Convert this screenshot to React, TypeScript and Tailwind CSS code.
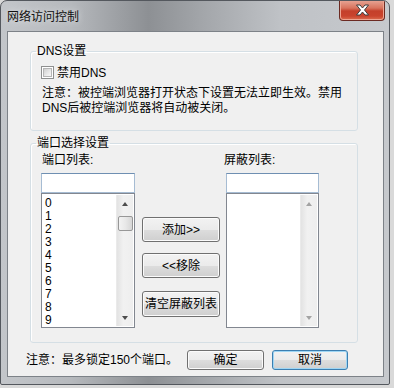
const font = { fontFamily: '"Liberation Sans", "Noto Sans CJK SC", sans-serif' };

function ScrollBar({ thumb }: { thumb?: boolean }) {
  return (
    <div className="w-[17px] flex flex-col items-center bg-[linear-gradient(to_right,#e3e3e3,#f1f1f1_40%,#eeeeee)] border-l border-[#eaeaea]">
      <div className="h-[17px] flex items-center justify-center">
        <div className={`w-0 h-0 border-x-[3.5px] border-x-transparent border-b-[4px] ${thumb ? 'border-b-[#4d4d4d]' : 'border-b-[#a3a3a3]'}`} />
      </div>
      {thumb && (
        <div className="mt-[4px] w-[15px] h-[15px] rounded-[2px] border border-[#979797] bg-[linear-gradient(to_right,#f3f3f3,#e8e8e8_50%,#d6d6d6)]" />
      )}
      <div className="flex-1" />
      <div className="h-[17px] flex items-center justify-center">
        <div className={`w-0 h-0 border-x-[3.5px] border-x-transparent border-t-[4px] ${thumb ? 'border-t-[#4d4d4d]' : 'border-t-[#a3a3a3]'}`} />
      </div>
    </div>
  );
}

function Btn({ label, cls, focus }: { label: string; cls: string; focus?: boolean }) {
  return (
    <div
      className={`${cls} flex items-center justify-center rounded-[3px] border text-[12px] text-black ${
        focus
          ? 'border-[#3c7fb1] shadow-[inset_0_0_0_1px_#9fd6f4]'
          : 'border-[#707070] shadow-[inset_0_0_0_1px_#fbfbfb]'
      } bg-[linear-gradient(to_bottom,#f2f2f2_0%,#ebebeb_50%,#dddddd_51%,#cfcfcf_100%)]`}
    >
      {label}
    </div>
  );
}

function ListCol({ label, items, thumb, labelCls }: { label: string; items: string[]; thumb?: boolean; labelCls: string }) {
  return (
    <div className="flex flex-col">
      <div className={`${labelCls} mt-[3px] h-[14px] leading-[14px] text-[12px]`}>{label}</div>
      <div className="mt-[6px] h-[20px] bg-white border border-[#a6bcd3] border-t-[#6f8fb2]" />
      <div className="h-[135px] flex bg-white border border-[#828790] p-[1px]">
        <div className="flex-1 pl-[2px] pt-[2px] text-[12px] leading-[13px] text-black">
          {items.map((it) => (
            <div key={it}>{it}</div>
          ))}
        </div>
        <ScrollBar thumb={thumb} />
      </div>
    </div>
  );
}

export default function App() {
  const ports = ['0', '1', '2', '3', '4', '5', '6', '7', '8', '9'];
  return (
    <div className="w-[394px] h-[388px] bg-[#d9d9d9]" style={font}>
      <div className="w-[390px] h-[385px] flex flex-col rounded-t-[7px] rounded-b-[2px] border border-[#54585e] bg-[linear-gradient(to_right,#c3c6ca_0%,#b6b9bd_18%,#8d9094_38%,#a3a6aa_52%,#bfc2c6_72%,#c6c9cd_100%)] overflow-hidden">
        {/* title bar */}
        <div className="h-[30px] flex items-start shrink-0">
          <div className="pl-[6px] pt-[9px] text-[12px] leading-[14px] text-[#111] [text-shadow:0_0_6px_#e8eaec]">
            网络访问控制
          </div>
          <div className="ml-auto mr-[4px] w-[46px] h-[21px] -mt-[1px] rounded-b-[4px] border border-[#6b2a22] border-t-0 flex items-center justify-center bg-[linear-gradient(to_bottom,#e8a898_0%,#d8745e_40%,#c4402b_55%,#c9432d_80%,#dc6e50_100%)] shadow-[inset_0_0_0_1px_#eea593]">
            <svg width="15" height="12" viewBox="0 0 15 12">
              <path
                d="M1.5 1 H5 L7.5 4 L10 1 H13.5 L9.5 6 L13.5 11 H10 L7.5 8 L5 11 H1.5 L5.5 6 Z"
                fill="#ffffff"
                stroke="#3d3d3d"
                strokeWidth="1"
                strokeLinejoin="round"
              />
            </svg>
          </div>
        </div>

        {/* client */}
        <div className="ml-[6px] mr-[5px] mb-[7px] flex-1 flex flex-col bg-[#f0f0f0] border border-[#7d8288] text-black">
          <fieldset className="ml-[22px] mt-[12px] w-[328px] h-[87px] border border-[#d5dfe5] rounded-[3px] pl-[10px] shadow-[inset_1px_1px_0_#ffffff]">
            <legend className="-ml-[5px] px-[1px] text-[12px] leading-[14px]">DNS设置</legend>
            <div className="mt-[8px] flex items-center h-[13px]">
              <div className="w-[13px] h-[13px] border border-[#8e8f8f] bg-white p-[1px]">
                <div className="w-full h-full bg-[linear-gradient(135deg,#cfcfcf,#eeeeee_70%,#f6f6f6)] border border-[#b5b5b5]" />
              </div>
              <span className="ml-[3px] text-[12px] leading-[14px]">禁用DNS</span>
            </div>
            <div className="mt-[7px] ml-[1px] text-[12px] leading-[15px]">
              注意：被控端浏览器打开状态下设置无法立即生效。禁用
              <br />
              DNS后被控端浏览器将自动被关闭。
            </div>
          </fieldset>

          <fieldset className="ml-[22px] mt-[5px] w-[328px] h-[207px] border border-[#d5dfe5] rounded-[3px] pl-[10px] shadow-[inset_1px_1px_0_#ffffff]">
            <legend className="-ml-[5px] px-[1px] text-[12px] leading-[14px]">端口选择设置</legend>
            <div className="flex">
              <div className="w-[94px]">
                <ListCol label="端口列表:" items={ports} thumb labelCls="ml-[1px]" />
              </div>
              <div className="ml-[7px] w-[78px] flex flex-col">
                <Btn label="添加>>" cls="mt-[67px] h-[25px]" />
                <Btn label="<<移除" cls="mt-[11px] h-[25px]" />
                <Btn label="清空屏蔽列表" cls="mt-[13px] h-[26px]" />
              </div>
              <div className="ml-[6px] w-[93px]">
                <ListCol label="屏蔽列表:" items={[]} labelCls="-ml-[2px]" />
              </div>
            </div>
          </fieldset>

          <div className="mt-[7px] flex items-center h-[20px]">
            <span className="ml-[18px] text-[12px] leading-[14px]">注意：最多锁定150个端口。</span>
            <div className="ml-auto mr-[35px] flex gap-[8px]">
              <Btn label="确定" cls="w-[77px] h-[20px]" />
              <Btn label="取消" cls="w-[76px] h-[20px]" focus />
            </div>
          </div>
        </div>
      </div>
    </div>
  );
}
